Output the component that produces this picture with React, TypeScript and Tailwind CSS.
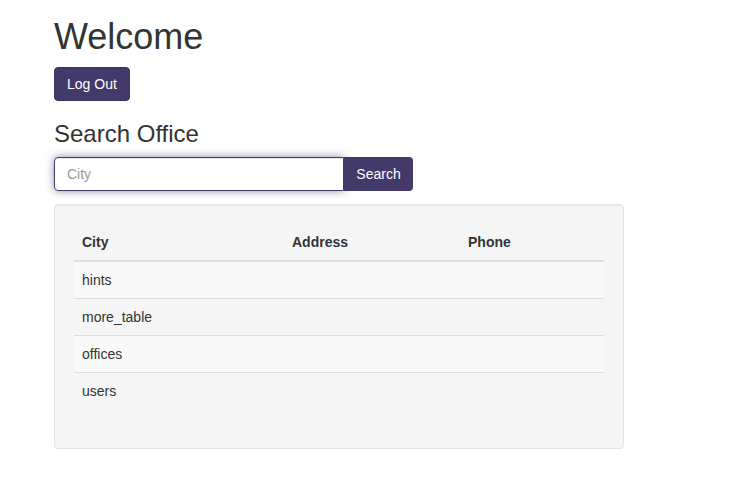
const TABLES = ['hints', 'more_table', 'offices', 'users']

export default function App() {
  return (
    <div className="min-h-screen bg-white px-[54px] text-[14px] leading-[20px] text-[#333] [font-family:'Liberation_Sans',Arial,sans-serif]">
      {/* Header */}
      <h1 className="pt-[17px] text-[36px] leading-[1.1] font-normal">Welcome</h1>
      <button className="mt-[10px] rounded-[4px] border border-[#3b3361] bg-[#433a6a] px-3 py-[6px] text-[14px] leading-[20px] text-white">
        Log Out
      </button>

      {/* Search */}
      <h3 className="mt-[20px] text-[24px] leading-[1.1] font-normal">Search Office</h3>
      <div className="mt-[10px] flex">
        <input
          type="text"
          placeholder="City"
          className="h-[34px] w-[290px] rounded-l-[4px] border border-[#433a6a] px-3 text-[14px] text-[#555] placeholder:text-[#999] shadow-[inset_0_1px_1px_rgba(0,0,0,0.075),0_0_8px_rgba(67,58,106,0.6)] outline-none"
        />
        <button className="h-[34px] w-[69px] rounded-r-[4px] bg-[#433a6a] text-[14px] text-white">
          Search
        </button>
      </div>

      {/* Results */}
      <div className="mt-[13px] w-[570px] rounded-[4px] border border-[#e3e3e3] bg-[#f5f5f5] p-[19px] shadow-[inset_0_1px_1px_rgba(0,0,0,0.05)]">
        <table className="mb-5 w-full border-collapse">
          <thead>
            <tr>
              <th className="w-[210px] border-b-2 border-[#ddd] p-2 text-left font-bold">City</th>
              <th className="w-[176px] border-b-2 border-[#ddd] p-2 text-left font-bold">Address</th>
              <th className="border-b-2 border-[#ddd] p-2 text-left font-bold">Phone</th>
            </tr>
          </thead>
          <tbody>
            {TABLES.map((name, i) => (
              <tr key={name} className={i % 2 === 0 ? 'bg-[#f9f9f9]' : ''}>
                <td className={i > 0 ? 'border-t border-[#ddd] p-2' : 'p-2'}>{name}</td>
                <td className={i > 0 ? 'border-t border-[#ddd] p-2' : 'p-2'}></td>
                <td className={i > 0 ? 'border-t border-[#ddd] p-2' : 'p-2'}></td>
              </tr>
            ))}
          </tbody>
        </table>
      </div>
    </div>
  )
}
